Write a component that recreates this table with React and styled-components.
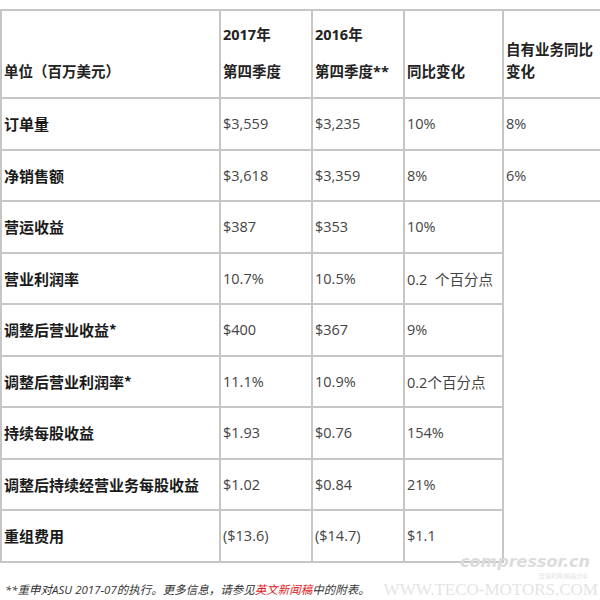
import React from "react";
import styled, { createGlobalStyle } from "styled-components";

const GlobalStyle = createGlobalStyle`
  html, body {
    margin: 0;
    padding: 0;
    background: #fff;
    width: 600px;
    height: 600px;
    overflow: hidden;
  }
  body {
    font-family: "Open Sans", "Noto Sans CJK SC", sans-serif;
  }
`;

const rows = [
  ["订单量", "$3,559", "$3,235", "10%", "8%"],
  ["净销售额", "$3,618", "$3,359", "8%", "6%"],
  ["营运收益", "$387", "$353", "10%"],
  ["营业利润率", "10.7%", "10.5%", "0.2\u00a0\u00a0个百分点"],
  ["调整后营业收益*", "$400", "$367", "9%"],
  ["调整后营业利润率*", "11.1%", "10.9%", "0.2个百分点"],
  ["持续每股收益", "$1.93", "$0.76", "154%"],
  ["调整后持续经营业务每股收益", "$1.02", "$0.84", "21%"],
  ["重组费用", "($13.6)", "($14.7)", "$1.1"],
];

const Page = styled.div`
  position: relative;
  width: 600px;
  height: 600px;
  padding-top: 9px;
  box-sizing: border-box;
`;

const Table = styled.table`
  border-collapse: collapse;
  table-layout: fixed;
  width: 600px;
  border-top: 2px solid #b4b4b4;
  border-left: 2px solid #8a8a8a;
`;

const HeadCell = styled.td`
  border: 2px solid #c6c6c6;
  border-right: ${(p) => (p.$open ? "none" : "2px solid #c6c6c6")};
  height: 72px;
  vertical-align: bottom;
  padding: 0 2px 14px 2px;
  font-family: "Open Sans", "Noto Sans CJK SC", sans-serif;
  font-weight: 700;
  font-size: 14.5px;
  color: #222;
  line-height: 22px;
`;

const HeadLine = styled.div`
  margin-top: ${(p) => p.$gap || 0}px;
  white-space: nowrap;
`;

const Cell = styled.td`
  border: 2px solid #c6c6c6;
  border-right: ${(p) => (p.$open ? "none" : "2px solid #c6c6c6")};
  height: 49.5px;
  padding: 0 2px;
  vertical-align: middle;
  white-space: nowrap;
  font-family: ${(p) =>
    p.$label
      ? `"Noto Sans CJK SC", sans-serif`
      : `"Open Sans", "Noto Sans CJK SC", sans-serif`};
  font-weight: ${(p) => (p.$label ? 700 : 400)};
  font-size: ${(p) => (p.$label ? "15px" : "14.5px")};
  color: ${(p) => (p.$label ? "#1a1a1a" : "#444")};
`;

const Note = styled.div`
  position: absolute;
  left: 5px;
  top: 581px;
  font-family: "Open Sans", "Noto Sans CJK SC", sans-serif;
  font-style: italic;
  font-size: 11.5px;
  color: #333;
`;

const Red = styled.span`
  color: #e0231f;
`;

const Mark = styled.div`
  position: absolute;
  right: 2px;
  bottom: 1px;
  display: flex;
  flex-direction: column;
  align-items: flex-end;
  pointer-events: none;
`;

const MarkLogo = styled.div`
  font-family: "DejaVu Sans", sans-serif;
  font-weight: 700;
  font-style: italic;
  font-size: 16px;
  color: #dcdcdc;
  line-height: 19px;
  margin-right: 8px;
`;

const MarkSub = styled.div`
  font-family: "Noto Sans CJK SC", sans-serif;
  font-size: 6px;
  color: #e2e2e2;
  line-height: 9px;
  margin-right: 10px;
`;

const MarkSite = styled.div`
  font-family: "Liberation Serif", serif;
  font-size: 17px;
  color: #e4e4e4;
  line-height: 19px;
  white-space: nowrap;
`;

export default function App() {
  return (
    <Page>
      <GlobalStyle />
      <Table>
        <colgroup>
          <col style={{ width: 219 }} />
          <col style={{ width: 92 }} />
          <col style={{ width: 92 }} />
          <col style={{ width: 99 }} />
          <col style={{ width: 98 }} />
        </colgroup>
        <tbody>
          <tr>
            <HeadCell>单位（百万美元）</HeadCell>
            <HeadCell>
              <HeadLine>2017年</HeadLine>
              <HeadLine $gap={15}>第四季度</HeadLine>
            </HeadCell>
            <HeadCell>
              <HeadLine>2016年</HeadLine>
              <HeadLine $gap={15}>第四季度**</HeadLine>
            </HeadCell>
            <HeadCell>同比变化</HeadCell>
            <HeadCell $open>
              <HeadLine>自有业务同比</HeadLine>
              <HeadLine>变化</HeadLine>
            </HeadCell>
          </tr>
          {rows.map((r, i) => (
            <tr key={"row" + i}>
              {r.map((v, j) => (
                <Cell key={"c" + j} $label={j === 0} $open={j === 4}>
                  {v}
                </Cell>
              ))}
            </tr>
          ))}
        </tbody>
      </Table>
      <Note>
        **重申对ASU 2017-07的执行。更多信息，请参见<Red>英文新闻稿</Red>中的附表。
      </Note>
      <Mark>
        <MarkLogo>compressor.cn</MarkLogo>
        <MarkSub>压缩机网 精品分享</MarkSub>
        <MarkSite>WWW.TECO-MOTORS.COM</MarkSite>
      </Mark>
    </Page>
  );
}
